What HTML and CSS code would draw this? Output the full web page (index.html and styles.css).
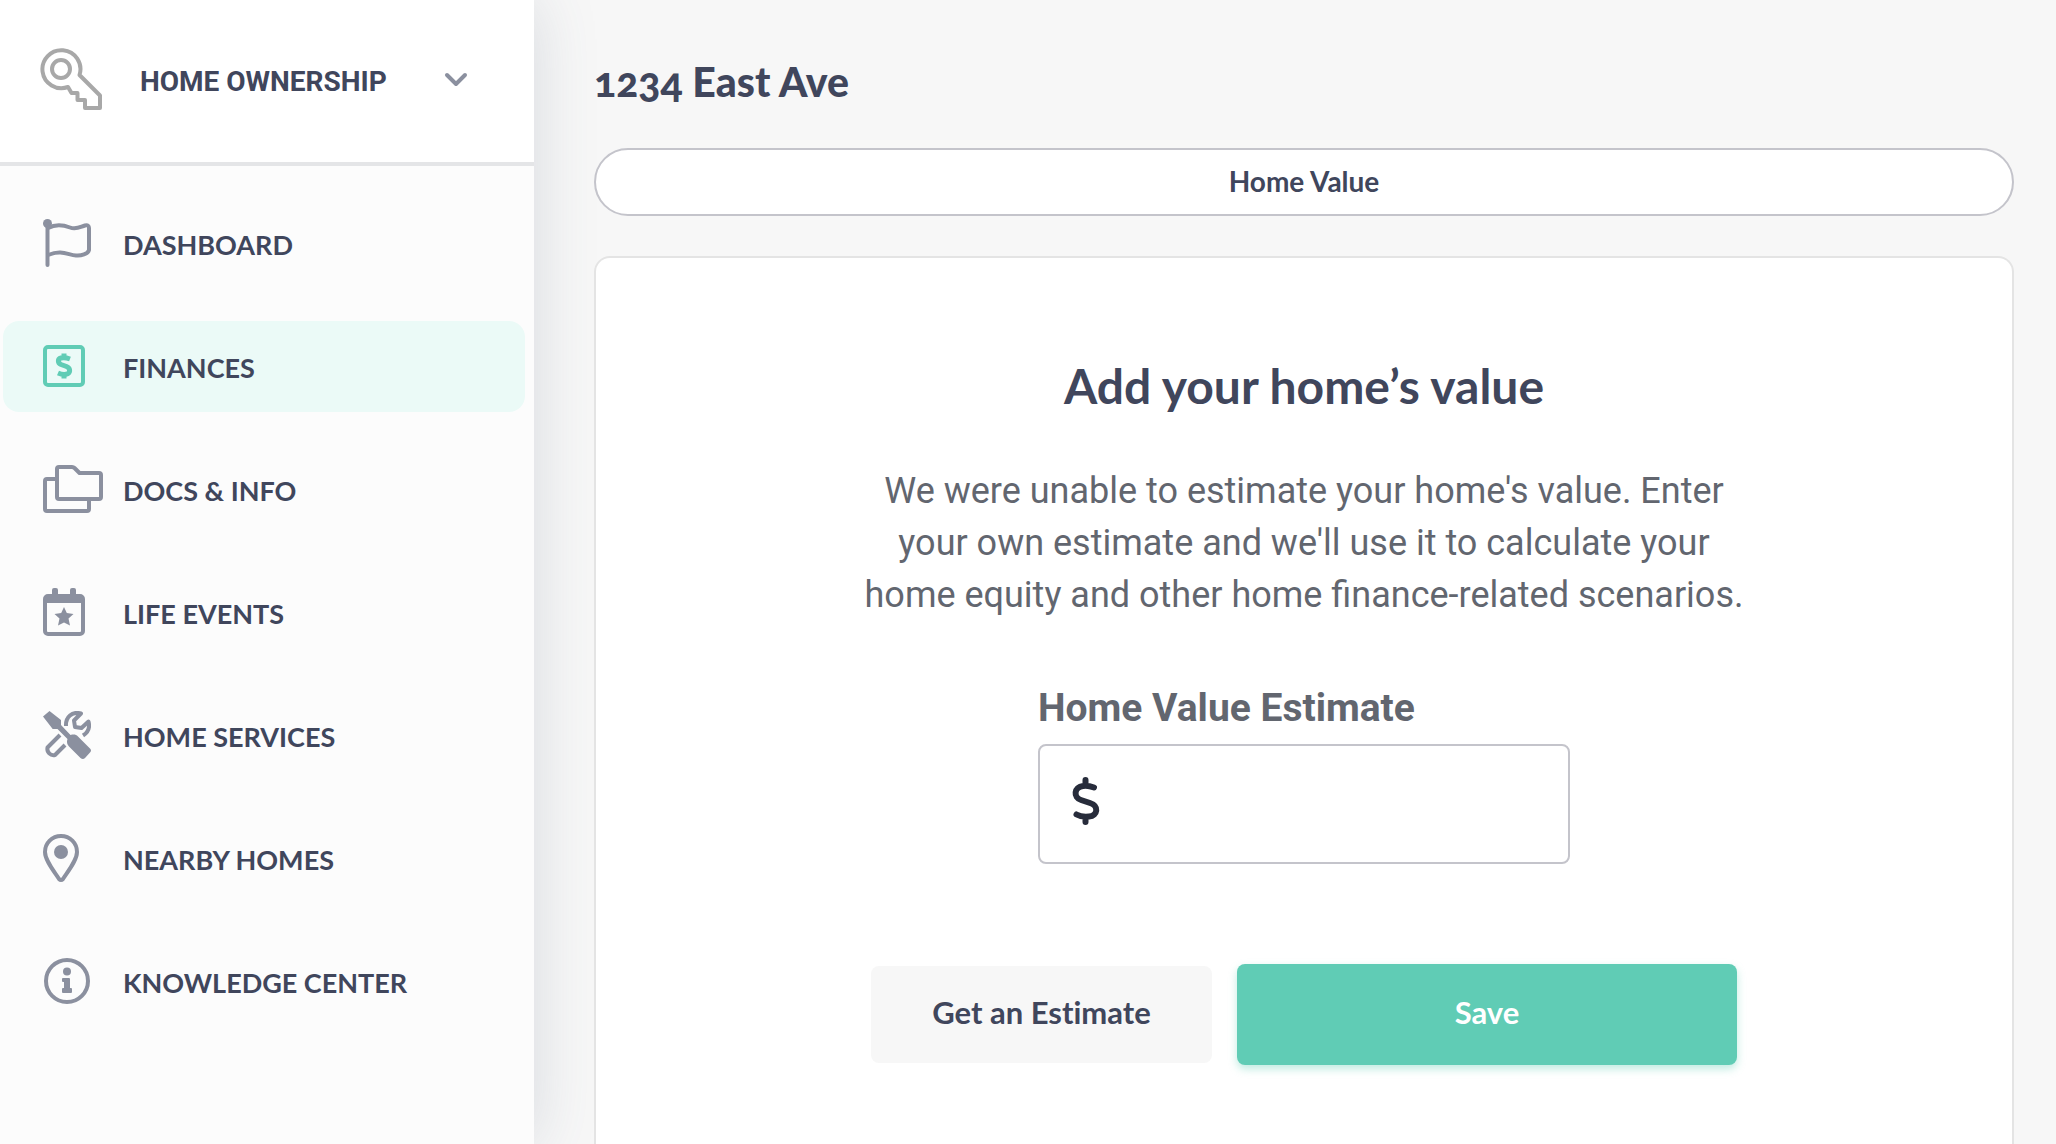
FILE: index.html
```html
<!DOCTYPE html>
<html lang="en">
<head>
  <meta charset="UTF-8" />
  <meta name="viewport" content="width=device-width, initial-scale=1" />
  <title>Finances - Home Value</title>
  <link rel="stylesheet" href="styles.css">
</head>
<body>
<div class="layout">

  <!-- SIDEBAR -->
  <aside class="sidebar">
    <button class="switcher" type="button">
      <svg class="key" width="62" height="63" viewBox="0 0 62 63">
        <circle cx="21" cy="22" r="9" />
        <path d="M28 40A19 19 0 1 1 39.5 28L60 48.500V61H45V53H37.500V46H31.500L28 40Z" />
      </svg>
      <span class="switcher-label">HOME OWNERSHIP</span>
      <svg class="chevron" width="24" height="16" viewBox="0 0 24 16">
        <path d="M3 3L12 12L21 3" />
      </svg>
    </button>

    <nav class="nav">
      <a class="nav-link" href="#dashboard">
        <svg class="icon" width="48" height="48" viewBox="0 0 48 48">
          <circle class="fill" cx="4.5" cy="4.500" r="4.500" />
          <path d="M4.500 5V46" />
          <path d="M5 9C14 4 22 6.500 27 8.500C33 11 37 8 42 6.500Q46 5.500 46 9V31C45 35 38 37 33 36.500C25 36 19 30.500 5 36" />
        </svg>
        <span>DASHBOARD</span>
      </a>
      <a class="nav-link active" href="#finances">
        <svg class="icon" width="42" height="42" viewBox="0 0 42 42">
          <rect x="2" y="2" width="38" height="38" rx="3" />
          <path class="thick" d="M27 14C23 12.500 20 12.500 18 13C14.500 14 14.500 18 18 19.500L23.500 21.500C28 23.500 27.500 28.500 23 29.300C20 29.800 18 29.300 15 28M21 8.500V12M21 30V33.500" />
        </svg>
        <span>FINANCES</span>
      </a>
      <a class="nav-link" href="#docs">
        <svg class="icon" width="60" height="48" viewBox="0 0 60 48">
          <path d="M16 2H29Q30.500 2 31.500 3L36.500 8H56Q58 8 58 10V32Q58 34 56 34H16Q14 34 14 32V4Q14 2 16 2Z" />
          <path d="M13 14H4Q2 14 2 16V44Q2 46 4 46H44Q46 46 46 44V35" />
        </svg>
        <span>DOCS &amp; INFO</span>
      </a>
      <a class="nav-link" href="#events">
        <svg class="icon" width="42" height="48" viewBox="0 0 42 48">
          <rect x="2" y="8" width="38" height="38" rx="3" />
          <path class="fill" d="M2 15V9Q2 7 4 7H9V2Q9 0 11 0H13Q15 0 15 2V7H27V2Q27 0 29 0H31Q33 0 33 2V7H38Q40 7 40 9V15Z" />
          <path class="fill" d="M21 19L23.800 25L30.500 26L25.500 30.500L27 37.500L21 34.500L15 37.500L16.500 30.500L11.500 26L18.200 25Z" />
        </svg>
        <span>LIFE EVENTS</span>
      </a>
      <a class="nav-link" href="#services">
        <svg class="icon" width="48" height="48" viewBox="0 0 48 48">
          <path class="fill" d="M6.500 0L18 9V14L27.500 24C31 23 33 23.500 35 25.500L47 37.500Q49 39.500 47 41.500L42 47Q40 49 37.500 47L26 35.500C24 33.500 23.500 31 24.500 28L14.500 18H9.700L0 5.500Z" />
          <path class="cut" d="M17 24L4.500 36.500A6.300 6.300 0 0 0 12 44L22 34" />
          <path class="cut" d="M23 15C22.500 6 29 0 38 2.500L31 9.500L32 16L38.500 17L45.500 10.500C47 16 45.500 21 40 24.500" />
        </svg>
        <span>HOME SERVICES</span>
      </a>
      <a class="nav-link" href="#nearby">
        <svg class="icon" width="36" height="48" viewBox="0 0 36 48">
          <path d="M18 2C9 2 2 9 2 18C2 26 10 36 16 45Q18 47 20 45C26 36 34 26 34 18C34 9 27 2 18 2Z" />
          <circle class="fill" cx="18" cy="18" r="7" />
        </svg>
        <span>NEARBY HOMES</span>
      </a>
      <a class="nav-link" href="#knowledge">
        <svg class="icon" width="48" height="48" viewBox="0 0 48 48">
          <circle cx="24" cy="24" r="21" />
          <circle class="fill" cx="24" cy="14.500" r="4" />
          <path class="fill" d="M20 21H26Q27 21 27 22V31H28Q29 31 29 32V35Q29 36 28 36H20Q19 36 19 35V32Q19 31 20 31H21V25H20Q19 25 19 24V22Q19 21 20 21Z" />
        </svg>
        <span>KNOWLEDGE CENTER</span>
      </a>
    </nav>
  </aside>

  <!-- CONTENT -->
  <main class="content">
    <h1>1234 East Ave</h1>
    <button class="tab" type="button">Home Value</button>

    <section class="card">
      <h2>Add your home’s value</h2>
      <p>We were unable to estimate your home's value. Enter your own estimate and we'll use it to calculate your home equity and other home finance-related scenarios.</p>

      <form class="form">
        <div class="field">
          <label for="estimate">Home Value Estimate</label>
          <div class="money">
            <svg class="dollar" width="28" height="48" viewBox="0 0 28 48">
              <path d="M22 10.500C18 9 14 8.500 11 9C2 10 1 20.500 9 23L18 26C27 29 26 38.500 17 39.500C12 40 8 39.500 4.500 37.500M13.500 3V8M13.500 40V45" />
            </svg>
            <input id="estimate" name="estimate" type="text" inputmode="numeric" />
          </div>
        </div>
        <div class="actions">
          <button class="btn btn-light" type="button">Get an Estimate</button>
          <button class="btn btn-primary" type="submit">Save</button>
        </div>
      </form>
    </section>
  </main>

</div>
</body>
</html>
```
FILE: styles.css
```css
* {
  box-sizing: border-box;
}
body {
  margin: 0;
  font-family: Lato, sans-serif;
  color: #40465c;
  background-color: #f7f7f7;
}
button, input {
  font-family: inherit;
  color: inherit;
}
button {
  cursor: pointer;
}
svg {
  flex: none;
  fill: none;
  stroke-linecap: round;
  stroke-linejoin: round;
}
.layout {
  display: flex;
  min-height: 100vh;
}

/* sidebar */
.sidebar {
  flex: none;
  width: 534px;
  background-color: #fcfcfc;
  box-shadow: 0 0 60px rgba(70,90,115,0.18);
}
.switcher {
  display: flex;
  align-items: center;
  width: 100%;
  height: 166px;
  padding: 0 66px 2px 40px;
  background: #fff;
  border: 0;
  border-bottom: 4px solid #e4e5e7;
}
.switcher-label {
  margin-left: 38px;
  padding-top: 2px;
  font: bold 28px Roboto, sans-serif;
}
.key {
  margin-bottom: 4px;
  stroke: #a8a8a8;
  stroke-width: 4;
}
.chevron {
  margin-left: auto;
  stroke: #8b909f;
  stroke-width: 4;
}
.nav {
  display: flex;
  flex-direction: column;
  gap: 32px;
  padding: 32px 9px 32px 3px;
}
.nav-link {
  display: grid;
  grid-template-columns: 60px 1fr;
  align-items: center;
  gap: 20px;
  height: 91px;
  padding: 0 0 1px 40px;
  border-radius: 16px;
  font-size: 27px;
  font-weight: bold;
  line-height: 32px;
  color: inherit;
  text-decoration: none;
}
.nav-link span {
  padding-top: 4px;
}
.nav-link.active {
  background-color: #ebfaf7;
}
.icon {
  stroke: #8b909f;
  stroke-width: 4;
}
.icon .fill {
  fill: #8b909f;
  stroke: none;
}
.icon .thick {
  stroke-width: 5;
  stroke-linecap: butt;
}
.icon .cut {
  stroke-linecap: butt;
}
.active .icon {
  stroke: #60ccb5;
}

/* content */
.content {
  display: flex;
  flex: 1;
  flex-direction: column;
  padding: 56px 42px 0 60px;
}
h1 {
  margin: 0 0 40px;
  font-size: 41px;
  font-weight: 900;
  font-variant-numeric: oldstyle-nums;
  line-height: 52px;
}
.tab {
  height: 68px;
  padding: 0 0 2px;
  background-color: #fff;
  border: 2px solid #c4c4cb;
  border-radius: 34px;
  font-size: 28px;
  font-weight: bold;
}
.card {
  flex: 1;
  margin-top: 40px;
  padding: 98px 40px 76px;
  background-color: #fff;
  border: 2px solid #e4e4e4;
  border-bottom: 0;
  border-radius: 16px 16px 0 0;
  text-align: center;
}
h2 {
  margin: 0 0 49px;
  font-size: 48px;
  line-height: 60px;
}
.card p {
  max-width: 900px;
  margin: 0 auto 63px;
  font: 36px/52px Roboto, sans-serif;
  color: #62666f;
}
.form {
  display: flex;
  flex-direction: column;
  align-items: center;
  gap: 100px;
}
.field {
  width: 532px;
  text-align: left;
}
.field label {
  display: block;
  margin-bottom: 12px;
  font: bold 39px/48px Roboto, sans-serif;
  color: #62666f;
}
.money {
  display: flex;
  align-items: center;
  gap: 16px;
  height: 120px;
  padding: 0 32px 6px;
  border: 2px solid #c4c4cb;
  border-radius: 8px;
}
.money input {
  flex: 1;
  min-width: 0;
  padding: 0;
  border: 0;
  outline: 0;
  background: none;
  font-size: 48px;
}
.dollar {
  stroke: #272c3b;
  stroke-width: 6;
}
.actions {
  display: flex;
  align-items: center;
  gap: 25px;
}
.btn {
  padding: 0 0 5px;
  border: 0;
  border-radius: 8px;
  font-size: 31px;
  font-weight: bold;
  font-variant-ligatures: none;
}
.btn-light {
  width: 341px;
  height: 97px;
  background-color: #f7f7f7;
}
.btn-primary {
  width: 500px;
  height: 101px;
  background-color: #60ccb5;
  color: #fff;
  box-shadow: 0 4px 8px rgba(96,204,181,0.4);
}
```
